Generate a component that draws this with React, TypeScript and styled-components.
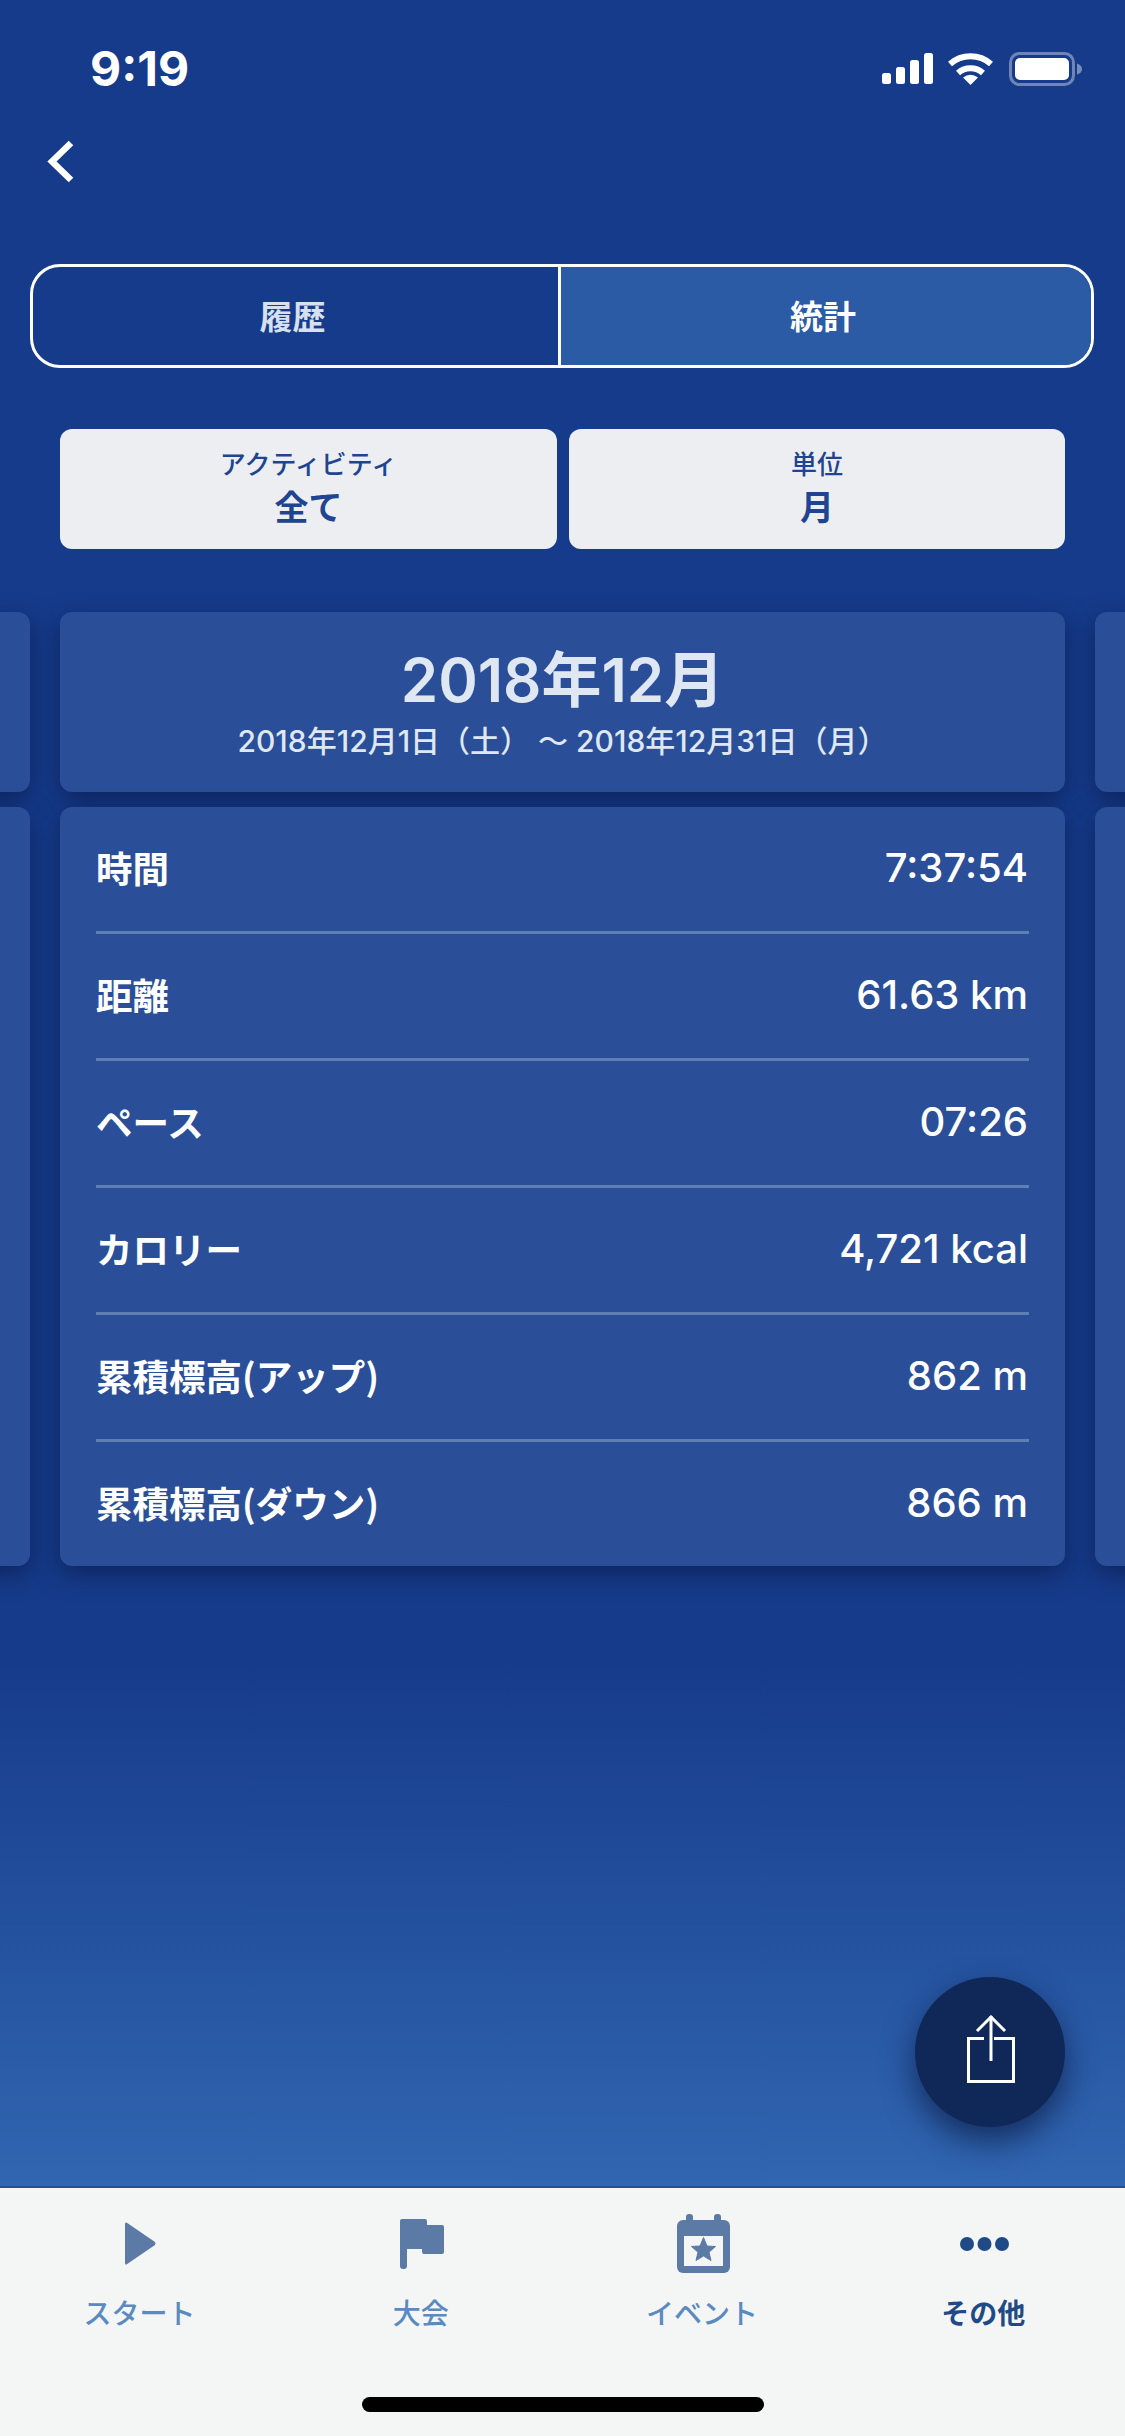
import React from "react";
import styled, { createGlobalStyle } from "styled-components";

const Global = createGlobalStyle`
  html, body { margin: 0; padding: 0; background: #163b8a; }
  * { box-sizing: border-box; }
`;

const FONT = `Inter, "Noto Sans CJK JP", "Noto Sans", sans-serif`;
const CJK = `"Noto Sans CJK JP", Inter, sans-serif`;

const Page = styled.div`
  width: 1125px;
  height: 2436px;
  display: flex;
  flex-direction: column;
  overflow: hidden;
  font-family: ${FONT};
`;

const Main = styled.main`
  position: relative;
  flex: 1;
  display: flex;
  flex-direction: column;
  overflow: hidden;
  background: linear-gradient(180deg, #163b8a 0%, #163b8a 76%, #3166b1 100%);
`;

const StatusBar = styled.div`
  height: 120px;
  padding: 44px 43px 0 90px;
  display: flex;
  justify-content: space-between;
  align-items: flex-start;
`;

const Time = styled.div`
  font-size: 48px;
  line-height: 50px;
  font-weight: 700;
  color: #fff;
`;

const StatusIcons = styled.svg`
  width: 200px;
  height: 36px;
  margin-top: 7px;
  display: block;
`;

const NavBar = styled.div`
  height: 144px;
  padding: 20px 0 0 47px;
`;

const BackIcon = styled.svg`
  width: 27px;
  height: 43px;
  display: block;
`;

const Segment = styled.div`
  margin: 0 31px 0 30px;
  height: 104px;
  display: grid;
  grid-template-columns: 525px 1fr;
  border: 3px solid #fff;
  border-radius: 30px;
  overflow: hidden;
`;

const SegmentItem = styled.div<{ $active?: boolean }>`
  display: flex;
  align-items: center;
  justify-content: center;
  padding: 0 6px 2px 0;
  font-family: ${CJK};
  font-size: 33px;
  font-weight: 700;
  color: ${(p) => (p.$active ? "#fff" : "#d6e0ee")};
  background: ${(p) => (p.$active ? "#2a5ba4" : "transparent")};
  & + & {
    border-left: 3px solid #fff;
  }
`;

const Filters = styled.div`
  margin: 61px 60px 0;
  display: grid;
  grid-template-columns: 497px 496px;
  gap: 12px;
`;

const Filter = styled.div`
  height: 120px;
  background: #eceef2;
  border-radius: 12px;
  display: flex;
  flex-direction: column;
  align-items: center;
  justify-content: center;
  color: #1f4490;
  font-family: ${CJK};
`;

const FilterLabel = styled.div`
  font-size: 26px;
  line-height: 36px;
  font-weight: 500;
  margin-top: -3px;
`;

const FilterValue = styled.div`
  font-size: 34px;
  line-height: 48px;
  font-weight: 700;
  margin-top: 1px;
`;

const Carousel = styled.div`
  margin-top: 63px;
  display: flex;
  justify-content: center;
  gap: 30px;
`;

const Column = styled.div`
  flex: 0 0 1005px;
  display: flex;
  flex-direction: column;
  gap: 15px;
`;

const Card = styled.div`
  background: #2a4f98;
  border-radius: 12px;
  box-shadow: 0 8px 24px rgba(8, 22, 65, 0.6);
`;

const DateCard = styled(Card)`
  height: 180px;
  display: flex;
  flex-direction: column;
  align-items: center;
  padding-top: 30px;
  color: #dfe8f2;
`;

const DateTitle = styled.div`
  font-size: 60px;
  line-height: 76px;
  font-weight: 600;
`;

const DateRange = styled.div`
  font-size: 30px;
  line-height: 40px;
  font-weight: 500;
  margin-top: 3px;
  white-space: nowrap;
`;

const StatsCard = styled(Card)`
  height: 759px;
  padding: 0 36px;
  display: flex;
  flex-direction: column;
`;

const StatRow = styled.div`
  flex: 1;
  display: flex;
  align-items: center;
  justify-content: space-between;
  color: #fff;
  padding-bottom: 3px;
  & + & {
    border-top: 3px solid #5f7fb4;
  }
`;

const StatLabel = styled.span`
  font-family: ${CJK};
  font-size: 36.5px;
  font-weight: 700;
`;

const StatValue = styled.span`
  font-size: 40px;
  font-weight: 500;
  padding-right: 1px;
`;

const Fab = styled.button`
  position: absolute;
  right: 60px;
  bottom: 59px;
  width: 150px;
  height: 150px;
  border: 0;
  padding: 0;
  border-radius: 50%;
  background: #102858;
  box-shadow: 0 14px 32px rgba(8, 20, 55, 0.65);
  display: flex;
  align-items: center;
  justify-content: center;
`;

const ShareIcon = styled.svg`
  width: 50px;
  height: 70px;
  display: block;
  margin: 0 0 5px 4px;
`;

const TabBar = styled.nav`
  height: 250px;
  background: #f4f6f6;
  border-top: 2px solid #23508f;
  display: grid;
  grid-template-columns: repeat(4, 1fr);
  position: relative;
`;

const Tab = styled.div`
  display: flex;
  flex-direction: column;
  align-items: center;
`;

const TabIconBox = styled.div`
  height: 95px;
  padding-top: 16px;
  display: flex;
  align-items: center;
  justify-content: center;
`;

const TabLabel = styled.div<{ $active?: boolean }>`
  font-family: ${CJK};
  font-size: 28px;
  line-height: 40px;
  margin: 9px 2px 0 0;
  font-weight: ${(p) => (p.$active ? 700 : 500)};
  color: ${(p) => (p.$active ? "#1f4a87" : "#5b8abf")};
`;

const HomeIndicator = styled.div`
  position: absolute;
  left: 362px;
  bottom: 24px;
  width: 402px;
  height: 15px;
  border-radius: 8px;
  background: #000;
`;

const stats: [string, string][] = [
  ["時間", "7:37:54"],
  ["距離", "61.63 km"],
  ["ペース", "07:26"],
  ["カロリー", "4,721 kcal"],
  ["累積標高(アップ)", "862 m"],
  ["累積標高(ダウン)", "866 m"],
];

const ICON = "#5b7ba6";
const BAR_BG = "#f4f6f6";

const Neighbor = () => (
  <Column aria-hidden="true">
    <DateCard />
    <StatsCard />
  </Column>
);

export default function App() {
  return (
    <Page>
      <Global />
      <Main>
        <StatusBar>
          <Time>9:19</Time>
          <StatusIcons viewBox="0 0 200 36">
            <g fill="#fff">
              <rect x="0" y="22" width="9" height="11" rx="2.5" />
              <rect x="14" y="16" width="9" height="17" rx="2.5" />
              <rect x="28" y="9" width="9" height="24" rx="2.5" />
              <rect x="42" y="2" width="9" height="31" rx="2.5" />
              <path d="M88.5 34 L81 26.5 Q88.5 21 96 26.5 Z" />
            </g>
            <g fill="none" stroke="#fff" strokeWidth="6">
              <path d="M68 13 A31 31 0 0 1 109 13" />
              <path d="M76 22 A19 19 0 0 1 101 22" />
            </g>
            <rect x="128.5" y="2.5" width="63" height="31" rx="9" fill="none" stroke="#fff" strokeOpacity="0.38" strokeWidth="3" />
            <rect x="133" y="7" width="54" height="22" rx="5" fill="#fff" />
            <path d="M195 12.5 Q200 14 200 18 Q200 22 195 23.5 Z" fill="#fff" fillOpacity="0.42" />
          </StatusIcons>
        </StatusBar>
        <NavBar>
          <BackIcon viewBox="0 0 27 43">
            <path d="M24 3 L5 21.5 L24 40" fill="none" stroke="#fff" strokeWidth="6.5" />
          </BackIcon>
        </NavBar>
        <Segment>
          <SegmentItem>履歴</SegmentItem>
          <SegmentItem $active>統計</SegmentItem>
        </Segment>
        <Filters>
          <Filter>
            <FilterLabel>アクティビティ</FilterLabel>
            <FilterValue>全て</FilterValue>
          </Filter>
          <Filter>
            <FilterLabel>単位</FilterLabel>
            <FilterValue>月</FilterValue>
          </Filter>
        </Filters>
        <Carousel>
          <Neighbor />
          <Column>
            <DateCard>
              <DateTitle>2018年12月</DateTitle>
              <DateRange>2018年12月1日（土） ～ 2018年12月31日（月）</DateRange>
            </DateCard>
            <StatsCard>
              {stats.map(([label, value]) => (
                <StatRow key={label}>
                  <StatLabel>{label}</StatLabel>
                  <StatValue>{value}</StatValue>
                </StatRow>
              ))}
            </StatsCard>
          </Column>
          <Neighbor />
        </Carousel>
        <Fab aria-label="share">
          <ShareIcon viewBox="0 0 50 70" fill="none" stroke="#fff" strokeWidth="3">
            <path d="M17 23.5 H1.5 V66.5 H46.5 V23.5 H27" />
            <path d="M24 1 V46" />
            <path d="M10 16 L24 2 L38 16" />
          </ShareIcon>
        </Fab>
      </Main>
      <TabBar>
        <Tab>
          <TabIconBox>
            <svg width="31" height="43" viewBox="0 0 31 43">
              <path d="M1.5 0.5 L30 20 Q31 21.5 30 23 L1.5 42.5 Q0 43 0 41 V2 Q0 0 1.5 0.5 Z" fill={ICON} />
            </svg>
          </TabIconBox>
          <TabLabel>スタート</TabLabel>
        </Tab>
        <Tab>
          <TabIconBox>
            <svg width="44" height="50" viewBox="0 0 44 50">
              <path d="M2 0 H25 Q27 0 27 2 V6 H42 Q44 6 44 8 V33 Q44 35 42 35 H24 Q22 35 22 33 V30 H7 V47 Q7 50 4 50 H3 Q0 50 0 47 V2 Q0 0 2 0 Z" fill={ICON} />
            </svg>
          </TabIconBox>
          <TabLabel>大会</TabLabel>
        </Tab>
        <Tab>
          <TabIconBox>
            <svg width="53" height="59" viewBox="0 0 53 59">
              <rect x="0" y="6" width="53" height="53" rx="6" fill={ICON} />
              <rect x="9" y="0" width="7" height="12" rx="3" fill={ICON} />
              <rect x="37" y="0" width="7" height="12" rx="3" fill={ICON} />
              <rect x="7" y="22" width="39" height="30" fill={BAR_BG} />
              <path d="M26.5 23.5 L30 32 L38.5 32.5 L32 38.2 L34 46.5 L26.5 42 L19 46.5 L21 38.2 L14.5 32.5 L23 32 Z" fill={ICON} stroke={ICON} strokeWidth="1" strokeLinejoin="round" />
            </svg>
          </TabIconBox>
          <TabLabel>イベント</TabLabel>
        </Tab>
        <Tab>
          <TabIconBox>
            <svg width="49" height="14" viewBox="0 0 49 14">
              <circle cx="7" cy="7" r="7" fill="#1f4a87" />
              <circle cx="24.5" cy="7" r="7" fill="#1f4a87" />
              <circle cx="42" cy="7" r="7" fill="#1f4a87" />
            </svg>
          </TabIconBox>
          <TabLabel $active>その他</TabLabel>
        </Tab>
        <HomeIndicator />
      </TabBar>
    </Page>
  );
}
